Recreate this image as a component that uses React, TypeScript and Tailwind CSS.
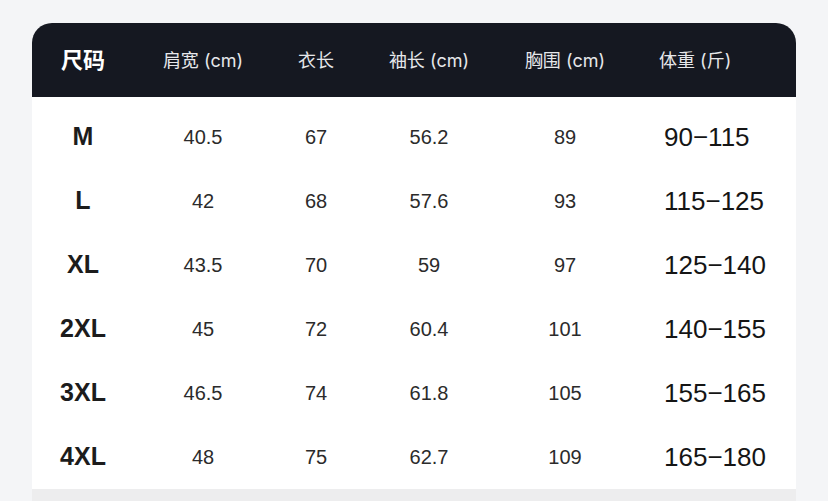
const rows = [
  { size: "M", shoulder: "40.5", length: "67", sleeve: "56.2", chest: "89", weight: "90−115" },
  { size: "L", shoulder: "42", length: "68", sleeve: "57.6", chest: "93", weight: "115−125" },
  { size: "XL", shoulder: "43.5", length: "70", sleeve: "59", chest: "97", weight: "125−140" },
  { size: "2XL", shoulder: "45", length: "72", sleeve: "60.4", chest: "101", weight: "140−155" },
  { size: "3XL", shoulder: "46.5", length: "74", sleeve: "61.8", chest: "105", weight: "155−165" },
  { size: "4XL", shoulder: "48", length: "75", sleeve: "62.7", chest: "109", weight: "165−180" },
];

const cols = ["w-[102px]", "w-[138px]", "w-[88px]", "w-[138px]", "w-[134px]"];

export default function App() {
  return (
    <div
      className="w-[828px] h-[501px] overflow-hidden bg-[#f4f5f7] pt-[23px] px-8"
      style={{ fontFamily: '"Liberation Sans", "Noto Sans CJK SC", sans-serif' }}
    >
      <div className="w-[764px]">
        {/* Header */}
        <div
          className="flex items-center h-[74px] bg-[#151821] rounded-t-[20px] text-[#e6e7ea] whitespace-nowrap"
          style={{ fontFamily: '"Inter", "Noto Sans CJK SC", sans-serif' }}
        >
          <div className={`${cols[0]} text-center text-[22px] font-semibold text-white`}>尺码</div>
          <div className={`${cols[1]} text-center text-[18px]`}>肩宽 (cm)</div>
          <div className={`${cols[2]} text-center text-[18px]`}>衣长</div>
          <div className={`${cols[3]} text-center text-[18px]`}>袖长 (cm)</div>
          <div className={`${cols[4]} text-center text-[18px]`}>胸围 (cm)</div>
          <div className="flex-1 pl-[27px] text-[18px]">体重 (斤)</div>
        </div>

        {/* Body */}
        <div className="bg-white pt-2">
          {rows.map((r) => (
            <div key={r.size} className="flex items-center h-16 text-[20px] text-[#2b2b2b] whitespace-nowrap">
              <div className={`${cols[0]} text-center text-[25px] font-bold text-[#1c1c1c]`}>{r.size}</div>
              <div className={`${cols[1]} text-center`}>{r.shoulder}</div>
              <div className={`${cols[2]} text-center`}>{r.length}</div>
              <div className={`${cols[3]} text-center`}>{r.sleeve}</div>
              <div className={`${cols[4]} text-center`}>{r.chest}</div>
              <div className="flex-1 pl-[32px] text-[26px] text-[#151515]">{r.weight}</div>
            </div>
          ))}
        </div>
        <div className="h-3 bg-[#ededee]" />
      </div>
    </div>
  );
}
